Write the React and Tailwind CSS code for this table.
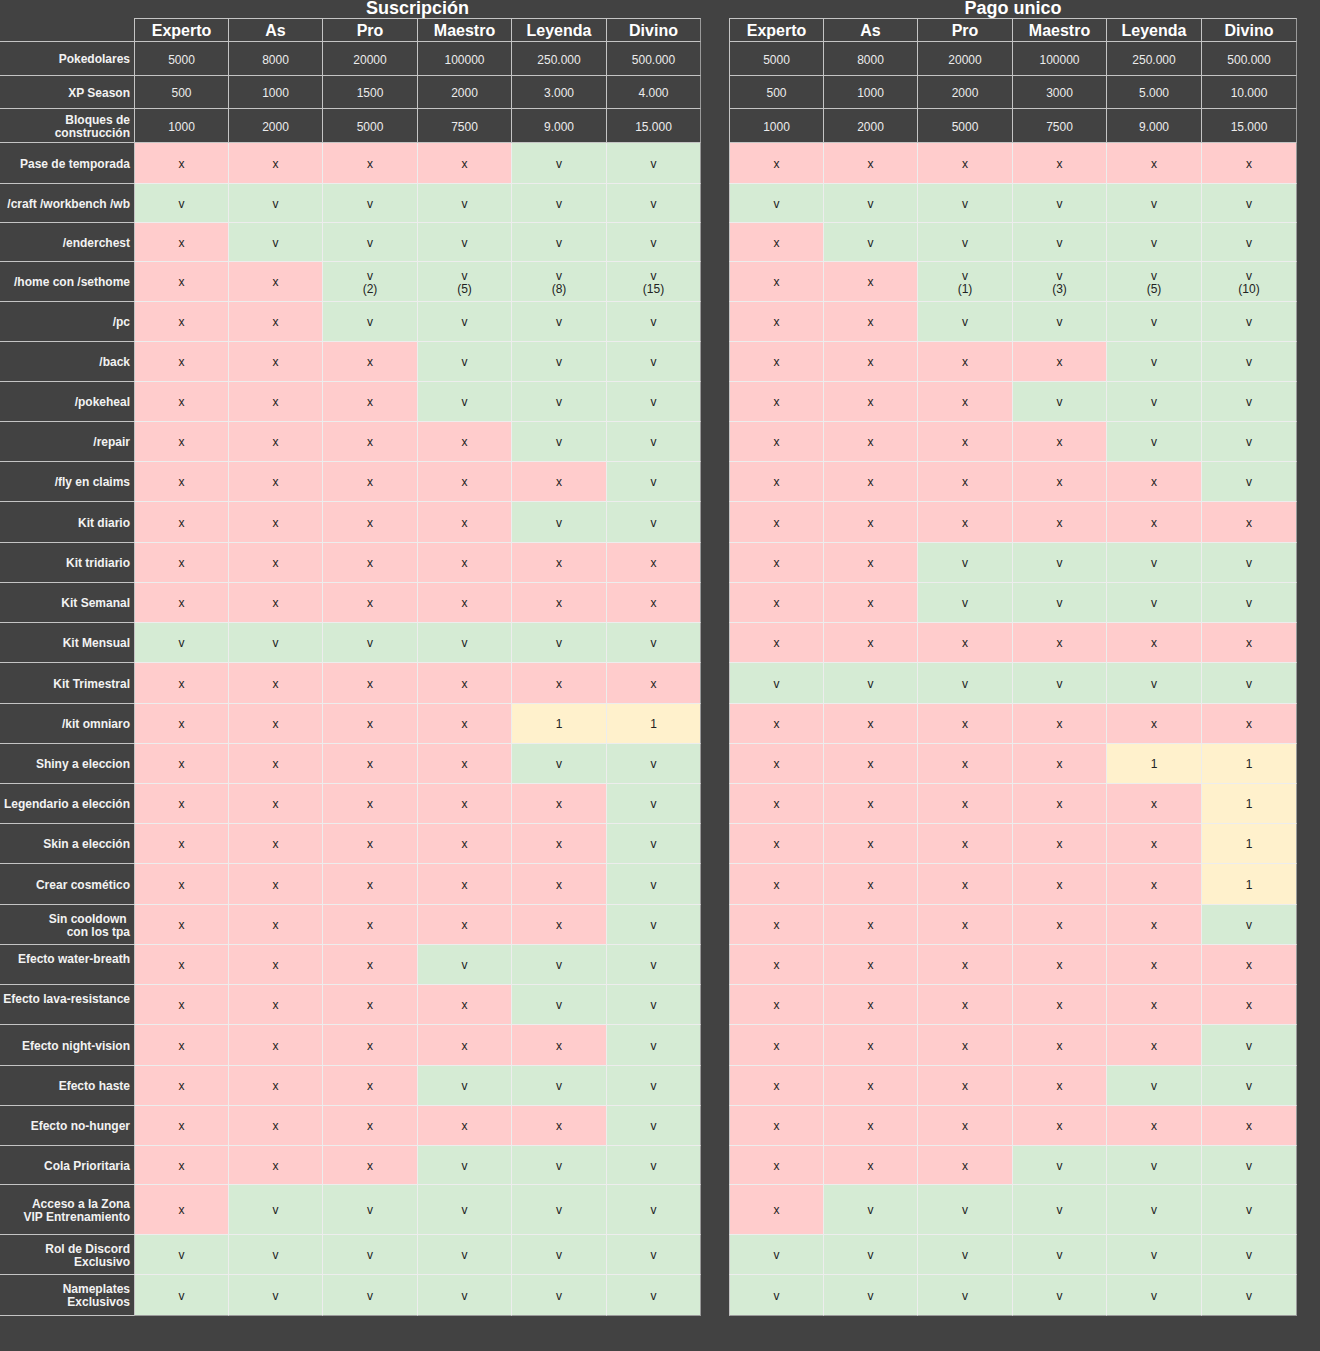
import React from 'react';

const TIERS = ['Experto', 'As', 'Pro', 'Maestro', 'Leyenda', 'Divino'];
const W1 = ['w-[95px]', 'w-[94px]', 'w-[95px]', 'w-[94px]', 'w-[95px]', 'w-[94px]'];
const W2 = ['w-[95px]', 'w-[94px]', 'w-[95px]', 'w-[94px]', 'w-[95px]', 'w-[95px]'];

const stats = [
  { label: 'Pokedolares', h: 'h-[34px]', a: ['5000', '8000', '20000', '100000', '250.000', '500.000'], b: ['5000', '8000', '20000', '100000', '250.000', '500.000'] },
  { label: 'XP Season', h: 'h-[33px]', a: ['500', '1000', '1500', '2000', '3.000', '4.000'], b: ['500', '1000', '2000', '3000', '5.000', '10.000'] },
  { label: 'Bloques de\nconstrucción', h: 'h-[34px]', a: ['1000', '2000', '5000', '7500', '9.000', '15.000'], b: ['1000', '2000', '5000', '7500', '9.000', '15.000'] },
];

// x = no, v = si, anything else shown on yellow
const features = [
  { label: 'Pase de temporada', h: 'h-[41px]', a: 'xxxxvv', b: 'xxxxxx' },
  { label: '/craft /workbench /wb', h: 'h-[39px]', a: 'vvvvvv', b: 'vvvvvv' },
  { label: '/enderchest', h: 'h-[39px]', a: 'xvvvvv', b: 'xvvvvv' },
  { label: '/home con /sethome', h: 'h-[40px]', a: ['x', 'x', 'v\n(2)', 'v\n(5)', 'v\n(8)', 'v\n(15)'], b: ['x', 'x', 'v\n(1)', 'v\n(3)', 'v\n(5)', 'v\n(10)'] },
  { label: '/pc', h: 'h-[40px]', a: 'xxvvvv', b: 'xxvvvv' },
  { label: '/back', h: 'h-[40px]', a: 'xxxvvv', b: 'xxxxvv' },
  { label: '/pokeheal', h: 'h-[40px]', a: 'xxxvvv', b: 'xxxvvv' },
  { label: '/repair', h: 'h-[40px]', a: 'xxxxvv', b: 'xxxxvv' },
  { label: '/fly en claims', h: 'h-[40px]', a: 'xxxxxv', b: 'xxxxxv' },
  { label: 'Kit diario', h: 'h-[41px]', a: 'xxxxvv', b: 'xxxxxx' },
  { label: 'Kit tridiario', h: 'h-[40px]', a: 'xxxxxx', b: 'xxvvvv' },
  { label: 'Kit Semanal', h: 'h-[40px]', a: 'xxxxxx', b: 'xxvvvv' },
  { label: 'Kit Mensual', h: 'h-[40px]', a: 'vvvvvv', b: 'xxxxxx' },
  { label: 'Kit Trimestral', h: 'h-[41px]', a: 'xxxxxx', b: 'vvvvvv' },
  { label: '/kit omniaro', h: 'h-[40px]', a: 'xxxx11', b: 'xxxxxx' },
  { label: 'Shiny a eleccion', h: 'h-[40px]', a: 'xxxxvv', b: 'xxxx11' },
  { label: 'Legendario a elección', h: 'h-[40px]', a: 'xxxxxv', b: 'xxxxx1' },
  { label: 'Skin a elección', h: 'h-[40px]', a: 'xxxxxv', b: 'xxxxx1' },
  { label: 'Crear cosmético', h: 'h-[41px]', a: 'xxxxxv', b: 'xxxxx1' },
  { label: 'Sin cooldown \ncon los tpa', h: 'h-[40px]', a: 'xxxxxv', b: 'xxxxxv' },
  { label: 'Efecto water-breath', h: 'h-[40px]', a: 'xxxvvv', b: 'xxxxxx', up: true },
  { label: 'Efecto lava-resistance', h: 'h-[40px]', a: 'xxxxvv', b: 'xxxxxx', up: true },
  { label: 'Efecto night-vision', h: 'h-[41px]', a: 'xxxxxv', b: 'xxxxxv' },
  { label: 'Efecto haste', h: 'h-[40px]', a: 'xxxvvv', b: 'xxxxvv' },
  { label: 'Efecto no-hunger', h: 'h-[40px]', a: 'xxxxxv', b: 'xxxxxx' },
  { label: 'Cola Prioritaria', h: 'h-[39px]', a: 'xxxvvv', b: 'xxxvvv' },
  { label: 'Acceso a la Zona\nVIP Entrenamiento', h: 'h-[50px]', a: 'xvvvvv', b: 'xvvvvv' },
  { label: 'Rol de Discord\nExclusivo', h: 'h-[40px]', a: 'vvvvvv', b: 'vvvvvv' },
  { label: 'Nameplates\nExclusivos', h: 'h-[41px]', a: 'vvvvvv', b: 'vvvvvv', last: true },
];

const bgFor = (v) => {
  if (v === 'x') return 'bg-[#ffcccc]';
  if (v[0] === 'v') return 'bg-[#d5ebd4]';
  return 'bg-[#fff1cc]';
};

const Label = ({ text, h, up }) => (
  <div className={`w-[134px] ${h} shrink-0 flex items-center justify-end pr-[4px] pt-[2px] border-b border-[#c4c4c4] bg-[#424242]`}>
    <span className={`whitespace-pre text-right text-[12px] leading-[13px] font-bold text-[#f2f2f2] ${up ? 'pb-[13px]' : ''}`}>{text}</span>
  </div>
);

const Cell = ({ w, first, lastCol, lastRow, className, children }) => (
  <div
    className={[
      w,
      'shrink-0 flex items-center justify-center pt-[2px] text-center whitespace-pre border-b border-r',
      first ? 'border-l border-l-[#c4c4c4]' : '',
      lastCol ? 'border-r-[#9a9a9a]' : '',
      lastRow ? 'border-b-[#9a9a9a]' : '',
      className,
    ].join(' ')}
  >
    {children}
  </div>
);

const Group = ({ widths, values, kind, h, lastRow }) => (
  <div className={`flex ${h}`}>
    {values.map((v, i) => {
      const common = { w: widths[i], first: i === 0, lastCol: i === values.length - 1, lastRow };
      if (kind === 'head') {
        return (
          <Cell key={i} {...common} className="border-t border-[#c4c4c4] bg-[#424242] text-[16px] leading-[18px] font-bold text-white">
            {v}
          </Cell>
        );
      }
      if (kind === 'stat') {
        return (
          <Cell key={i} {...common} className="border-[#c4c4c4] bg-[#424242] text-[12px] text-[#ececec]">
            {v}
          </Cell>
        );
      }
      return (
        <Cell key={i} {...common} className={`border-[#ededed] ${bgFor(v)} text-[12px] leading-[13px] text-[#222]`}>
          {v}
        </Cell>
      );
    })}
  </div>
);

const Row = ({ label, h, a, b, kind, up, last }) => (
  <div className="flex items-stretch">
    {kind === 'head' ? (
      <div className={`w-[134px] ${h} shrink-0 border-b border-[#c4c4c4]`} />
    ) : (
      <Label text={label} h={h} up={up} />
    )}
    <Group widths={W1} values={a} kind={kind} h={h} lastRow={last} />
    <div className="w-[28px] shrink-0" />
    <Group widths={W2} values={b} kind={kind} h={h} lastRow={last} />
  </div>
);

export default function App() {
  return (
    <div className="w-[1320px] h-[1351px] bg-[#424242] overflow-hidden font-['Liberation_Sans',Arial,sans-serif]">
      <div className="flex h-[18px] text-[18px] leading-[17px] font-bold text-white">
        <div className="w-[134px] shrink-0" />
        <div className="w-[567px] shrink-0 text-center">Suscripción</div>
        <div className="w-[28px] shrink-0" />
        <div className="w-[568px] shrink-0 text-center">Pago unico</div>
      </div>
      <Row kind="head" h="h-[24px]" a={TIERS} b={TIERS} />
      {stats.map((s) => (
        <Row key={s.label} kind="stat" label={s.label} h={s.h} a={s.a} b={s.b} />
      ))}
      {features.map((f) => (
        <Row
          key={f.label}
          kind="feat"
          label={f.label}
          h={f.h}
          a={typeof f.a === 'string' ? f.a.split('') : f.a}
          b={typeof f.b === 'string' ? f.b.split('') : f.b}
          up={f.up}
          last={f.last}
        />
      ))}
    </div>
  );
}
